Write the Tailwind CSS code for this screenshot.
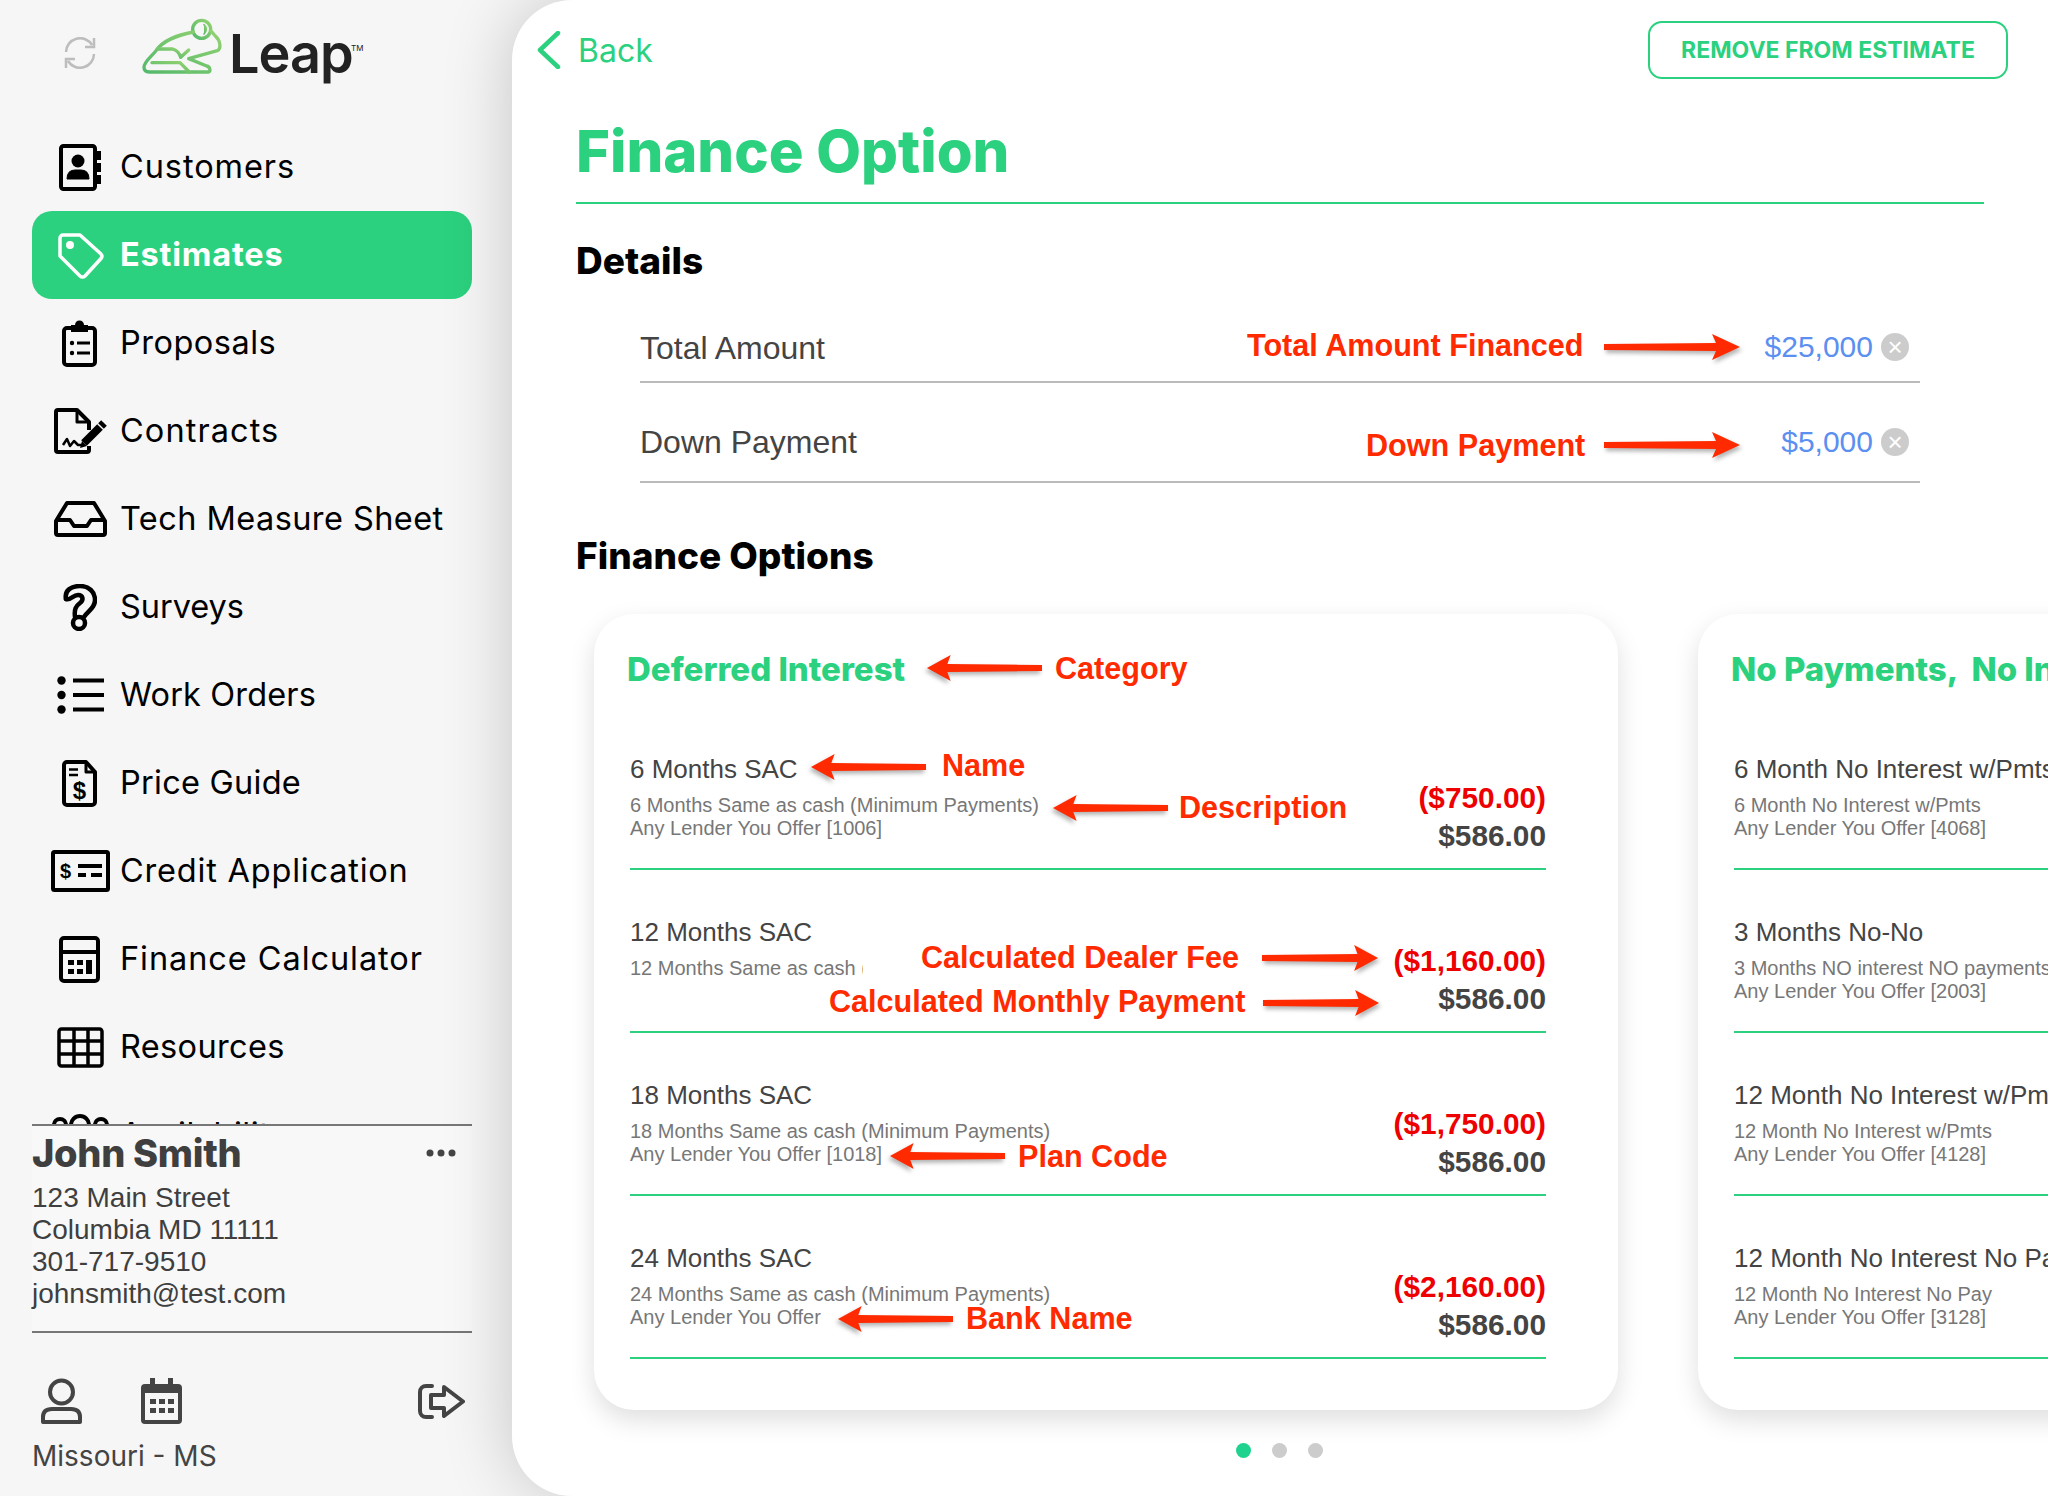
<!DOCTYPE html>
<html lang="en">
<head>
    <meta charset="UTF-8">
    <meta name="viewport" content="width=device-width, initial-scale=1.0">
    <title>Finance Option - Leap</title>
    <script src="https://cdn.jsdelivr.net/npm/@tailwindcss/browser@4"></script>
</head>
<body class="bg-[#f6f6f6]">
    <svg class="hidden">
        <symbol id="arrow" viewBox="0 0 136 28">
            <path d="M0 11 L112 10 L108 1 L136 14 L108 27 L112 18 L0 17Z" fill="#ff2a00"/>
        </symbol>
    </svg>

    <div class="relative flex w-[2048px] h-[1496px] overflow-hidden bg-[#f6f6f6] font-['Inter',sans-serif]">

        <!-- sidebar -->
        <aside class="w-[512px] shrink-0 flex flex-col">
            <div class="h-[123px] flex pl-[64px] shrink-0">
                <svg class="w-[32px] h-[32px] mt-[37px]" viewBox="0 0 32 32" fill="none" stroke="#bdbdbd" stroke-width="2.5">
                    <path d="M2 15 A14 14 0 0 1 28 8 M30 1 V10 H21"/>
                    <path d="M30 17 A14 14 0 0 1 4 24 M2 31 V22 H11"/>
                </svg>
                <svg class="w-[100px] h-[90px] ml-[34px] mt-[10px]" viewBox="0 0 300 270" fill="none" stroke-width="10" stroke-linejoin="round" stroke-linecap="round">
                    <defs>
                        <linearGradient id="frog" x1="0" y1="1" x2="1" y2="0">
                            <stop offset="0" stop-color="#55b96b"/>
                            <stop offset="1" stop-color="#93d271"/>
                        </linearGradient>
                    </defs>
                    <g stroke="url(#frog)">
                        <circle cx="215" cy="58" r="27"/>
                        <path d="M222 44 Q236 58 222 72" fill="url(#frog)" stroke-width="5"/>
                        <path d="M190 66 C140 76 100 90 78 122 C62 142 42 155 42 172 C42 182 48 186 58 186 H235 C243 186 241 170 230 168 L176 146 L262 122 C274 116 272 92 256 78 L242 62"/>
                        <path d="M82 117 H128 Q146 122 152 142 L176 120"/>
                        <path d="M66 158 H150 L178 186"/>
                    </g>
                </svg>
                <div class="relative mt-[27px] -ml-[1px] text-[54px] leading-[54px] font-semibold tracking-[-1px] text-[#222222]">Leap<span class="absolute left-[122px] top-[17px] text-[8px] leading-[8px] font-normal tracking-normal">TM</span></div>
            </div>

            <nav class="h-[1001px] overflow-hidden shrink-0 text-black text-[32.500px]">
                <a class="flex items-center h-[88px] ml-[32px] mr-[40px] tracking-[0.93px]">
                    <span class="w-[88px] shrink-0 pl-[27px]">
                        <svg class="w-[42px] h-[47px]" viewBox="0 0 42 47"><rect x="2" y="2" width="34" height="43" rx="2.500" fill="none" stroke="#000" stroke-width="4"/><path d="M38 7h4v9h-4zM38 19h4v9h-4zM38 31h4v9h-4z"/><circle cx="19" cy="17" r="6.500"/><path d="M8 35 q0-9 8-9 h6 q8 0 8 9 z" stroke="#000" stroke-width="1"/></svg>
                    </span>
                    Customers
                </a>
                <a class="flex items-center h-[88px] ml-[32px] mr-[40px] rounded-[20px] bg-[#2bd17e] text-white font-bold tracking-[0.8px]">
                    <span class="w-[88px] shrink-0 pl-[25px]">
                        <svg class="w-[47px] h-[47px]" viewBox="0 0 47 47" fill="none" stroke="#fff" stroke-width="3.500" stroke-linejoin="round"><path d="M3 6 a3 3 0 0 1 3-3 H23 L44 22 a3.500 3.500 0 0 1 0 4.500 L28 44 a3.500 3.500 0 0 1-5 0 L3 24 Z"/><circle cx="13" cy="13" r="4" fill="#fff" stroke="none"/></svg>
                    </span>
                    Estimates
                </a>
                <a class="flex items-center h-[88px] ml-[32px] mr-[40px] tracking-[0.5px]">
                    <span class="w-[88px] shrink-0 pl-[30px]">
                        <svg class="w-[35px] h-[47px]" viewBox="0 0 35 47"><rect x="2" y="8" width="31" height="37" rx="3" fill="none" stroke="#000" stroke-width="4"/><rect x="9" y="5" width="17" height="7"/><circle cx="17.500" cy="5" r="4.500"/><circle cx="10" cy="23" r="2.200"/><circle cx="10" cy="33" r="2.200"/><path d="M15 21.500h13v3H15zM15 31.500h13v3H15z"/></svg>
                    </span>
                    Proposals
                </a>
                <a class="flex items-center h-[88px] ml-[32px] mr-[40px] tracking-[1.08px]">
                    <span class="w-[88px] shrink-0 pl-[22px]">
                        <svg class="w-[53px] h-[46px]" viewBox="0 0 53 46" fill="none" stroke="#000" stroke-width="4" stroke-linejoin="round"><path d="M35 22 V14 L23 2 H4 a2 2 0 0 0-2 2 V42 a2 2 0 0 0 2 2 H33 a2 2 0 0 0 2-2 V38"/><path d="M23 2 V14 H35" stroke-width="3"/><path d="M9 37 L13 31 L16 38 L20 33 L24 37 H30" stroke-width="2.500"/><path d="M30 35 L46 19" stroke-width="8" stroke-linejoin="miter"/><path d="M47 18 L50 15" stroke-width="8"/><path d="M26 40 L28 33 L33 38 Z" fill="#000" stroke="none"/></svg>
                    </span>
                    Contracts
                </a>
                <a class="flex items-center h-[88px] ml-[32px] mr-[40px] tracking-[0.43px]">
                    <span class="w-[88px] shrink-0 pl-[22px]">
                        <svg class="w-[53px] h-[36px]" viewBox="0 0 53 36" fill="none" stroke="#000" stroke-width="4" stroke-linejoin="round"><path d="M2 20 L13 2 H40 L51 20 V32 a2 2 0 0 1-2 2 H4 a2 2 0 0 1-2-2 Z"/><path d="M2 19 H16 L20 25 H33 L37 19 H51"/></svg>
                    </span>
                    Tech Measure Sheet
                </a>
                <a class="flex items-center h-[88px] ml-[32px] mr-[40px] tracking-[-0.05px]">
                    <span class="w-[88px] shrink-0 pl-[31px]">
                        <svg class="w-[34px] h-[47px]" viewBox="0 0 34 47" fill="none" stroke="#000" stroke-width="4.500" stroke-linecap="round" stroke-linejoin="round"><path d="M3 15 C1 6 9 2 17 2 C26 2 32 8 32 16 C32 24 25 27 21 33"/><path d="M3 15 C7 17 10 11 15 11 C20 11 21 16 17 19 C13 22 11 25 12 33"/><circle cx="16" cy="39" r="6"/></svg>
                    </span>
                    Surveys
                </a>
                <a class="flex items-center h-[88px] ml-[32px] mr-[40px] tracking-[0.15px]">
                    <span class="w-[88px] shrink-0 pl-[25px]">
                        <svg class="w-[47px] h-[38px]" viewBox="0 0 47 38"><circle cx="4.500" cy="4.500" r="4.200"/><circle cx="4.500" cy="19" r="4.200"/><circle cx="4.500" cy="33.500" r="4.200"/><path d="M16 2.500h31v4H16zM16 17h31v4H16zM16 31.500h31v4H16z"/></svg>
                    </span>
                    Work Orders
                </a>
                <a class="flex items-center h-[88px] ml-[32px] mr-[40px] tracking-[0.26px]">
                    <span class="w-[88px] shrink-0 pl-[30px]">
                        <svg class="w-[35px] h-[47px]" viewBox="0 0 35 47" fill="none" stroke="#000" stroke-width="4" stroke-linejoin="round"><path d="M24 2 H5 a3 3 0 0 0-3 3 V42 a3 3 0 0 0 3 3 H30 a3 3 0 0 0 3-3 V12 Z"/><path d="M24 2 V12 H33" stroke-width="3"/><path d="M7 9.500h9M7 15h9" stroke-width="2.500"/><text x="17.500" y="39" text-anchor="middle" font-family="'Liberation Sans',sans-serif" font-weight="700" font-size="24" fill="#000" stroke="none">$</text></svg>
                    </span>
                    Price Guide
                </a>
                <a class="flex items-center h-[88px] ml-[32px] mr-[40px] tracking-[0.8px]">
                    <span class="w-[88px] shrink-0 pl-[19px]">
                        <svg class="w-[59px] h-[42px]" viewBox="0 0 59 42" fill="none" stroke="#000" stroke-width="4"><rect x="2" y="2" width="55" height="38" rx="1.500"/><text x="15" y="28" text-anchor="middle" font-family="'Liberation Sans',sans-serif" font-weight="700" font-size="20" fill="#000" stroke="none">$</text><path d="M27 16h24M27 25h8M40 25h11" stroke-width="4"/></svg>
                    </span>
                    Credit Application
                </a>
                <a class="flex items-center h-[88px] ml-[32px] mr-[40px] tracking-[0.93px]">
                    <span class="w-[88px] shrink-0 pl-[27px]">
                        <svg class="w-[41px] h-[47px]" viewBox="0 0 41 47"><rect x="2" y="2" width="37" height="43" rx="3" fill="none" stroke="#000" stroke-width="4"/><path d="M2 14h37v4H2zM9 24h6v5H9zM18 24h6v5h-6zM9 33h6v5H9zM18 33h6v5h-6zM27 24h6v14h-6z"/></svg>
                    </span>
                    Finance Calculator
                </a>
                <a class="flex items-center h-[88px] ml-[32px] mr-[40px] tracking-[0.35px]">
                    <span class="w-[88px] shrink-0 pl-[25px]">
                        <svg class="w-[47px] h-[41px]" viewBox="0 0 47 41" fill="none" stroke="#000" stroke-width="3.500"><rect x="2" y="2" width="43" height="37" rx="2.500"/><path d="M17 2V39M31 2V39M2 14H45M2 27H45"/></svg>
                    </span>
                    Resources
                </a>
                <a class="flex items-center h-[88px] ml-[32px] mr-[40px] tracking-[0.5px]">
                    <span class="w-[88px] shrink-0 pl-[20px]">
                        <svg class="w-[58px] h-[46px]" viewBox="0 0 58 46" fill="none" stroke="#000" stroke-width="4"><circle cx="8" cy="13" r="6"/><circle cx="28" cy="13" r="9"/><circle cx="49" cy="13" r="6"/></svg>
                    </span>
                    Availability
                </a>
            </nav>

            <div class="ml-[32px] mr-[40px] border-t-[2px] border-b-[2px] border-[#777777] bg-[#f8f8f8] pt-[5px] pb-[21px] text-[#3f3f3f]">
                <div class="flex items-center justify-between pr-[16px]">
                    <span class="text-[38px] leading-[44px] font-extrabold tracking-[-0.3px]">John Smith</span>
                    <svg class="w-[30px] h-[8px]" viewBox="0 0 30 8" fill="#444"><circle cx="4" cy="4" r="3.500"/><circle cx="15" cy="4" r="3.500"/><circle cx="26" cy="4" r="3.500"/></svg>
                </div>
                <div class="mt-[7px] font-['Liberation_Sans',sans-serif] text-[28px] leading-[32px]">
                    <p>123 Main Street</p>
                    <p>Columbia MD 11111</p>
                    <p>301-717-9510</p>
                    <p>johnsmith@test.com</p>
                </div>
            </div>

            <div class="ml-[32px] mr-[40px] pt-[45px] text-[#444444]">
                <div class="flex items-start">
                    <svg class="w-[41px] h-[46px] ml-[9px]" viewBox="0 0 41 46" fill="none" stroke="#444" stroke-width="4"><circle cx="20.500" cy="14" r="11.500"/><path d="M2 44 V39 Q2 31 11 31 H30 Q39 31 39 39 V44 Z" stroke-linejoin="round"/></svg>
                    <svg class="w-[41px] h-[46px] ml-[59px]" viewBox="0 0 41 46"><path d="M9 0h5v6h13V0h5v6h5a4 4 0 0 1 4 4v32a4 4 0 0 1-4 4H4a4 4 0 0 1-4-4V10a4 4 0 0 1 4-4h5z" fill="#444"/><rect x="4" y="15" width="33" height="27" fill="#f6f6f6"/><path d="M9 21h6v5H9zM18 21h6v5h-6zM27 21h6v5h-6zM9 30h6v5H9zM18 30h6v5h-6zM27 30h6v5h-6z" fill="#444"/></svg>
                    <svg class="w-[47px] h-[35px] ml-auto mr-[7px] mt-[6px]" viewBox="0 0 47 35" fill="none" stroke="#444" stroke-width="4" stroke-linejoin="round" stroke-linecap="round"><path d="M14 2 H8 a6 6 0 0 0-6 6 V27 a6 6 0 0 0 6 6 H14"/><path d="M13 11 H26 V3 L45 17.500 L26 32 V24 H13 Z"/></svg>
                </div>
                <div class="mt-[14px] text-[28px] leading-[36px]">Missouri - MS</div>
            </div>
        </aside>

        <!-- main panel -->
        <main class="relative z-10 flex-1 min-w-0 bg-white rounded-l-[60px] shadow-[0_0_70px_rgba(0,0,0,0.2)] pl-[64px]">
            <div class="flex items-center justify-between -ml-[39px] pt-[21px] pr-[40px]">
                <div class="flex items-center text-[#2bd17e]">
                    <svg class="w-[24px] h-[38px]" viewBox="0 0 24 38" fill="none" stroke="#2bd17e" stroke-width="4.500" stroke-linecap="round" stroke-linejoin="round"><path d="M21 2 L3 19 L21 36"/></svg>
                    <span class="ml-[17px] mt-[2px] text-[32px] leading-[40px]">Back</span>
                </div>
                <button class="w-[360px] h-[58px] border-[2px] border-[#2bd17e] rounded-[14px] text-[#2bd17e] text-[23px] font-bold">REMOVE FROM ESTIMATE</button>
            </div>

            <h1 class="w-[1408px] mt-[37px] pb-[16px] border-b-[2px] border-[#2bd17e] text-[#2bd17e] text-[58px] leading-[70px] font-extrabold">Finance Option</h1>

            <h2 class="mt-[35px] text-[37px] leading-[44px] font-extrabold text-black">Details</h2>

            <div class="ml-[64px] w-[1280px] font-['Liberation_Sans',sans-serif]">
                <div class="flex items-center justify-between pt-[45px] pb-[13px] pr-[11px] border-b-[2px] border-[#bbbbbb]">
                    <span class="text-[32px] leading-[40px] text-[#444444]">Total Amount</span>
                    <span class="flex items-center gap-[8px] -translate-y-px">
                        <span class="text-[30px] leading-[40px] text-[#5b8ff0]">$25,000</span>
                        <span class="flex items-center justify-center w-[28px] h-[28px] rounded-full bg-[#cccccc] text-white text-[26px] leading-none">×</span>
                    </span>
                </div>
                <div class="flex items-center justify-between pt-[39px] pb-[19px] pr-[11px] border-b-[2px] border-[#bbbbbb]">
                    <span class="text-[32px] leading-[40px] text-[#444444]">Down Payment</span>
                    <span class="flex items-center gap-[8px]">
                        <span class="text-[30px] leading-[40px] text-[#5b8ff0]">$5,000</span>
                        <span class="flex items-center justify-center w-[28px] h-[28px] rounded-full bg-[#cccccc] text-white text-[26px] leading-none">×</span>
                    </span>
                </div>
            </div>

            <h2 class="mt-[51px] text-[37px] leading-[44px] font-extrabold text-black">Finance Options</h2>

            <div class="flex gap-[80px] mt-[36px] ml-[18px]">
                <section class="w-[1024px] h-[796px] shrink-0 bg-white rounded-[40px] shadow-[0_10px_26px_rgba(0,0,0,0.13)] pt-[33px] pl-[33px]">
                    <h3 class="text-[33px] leading-[44px] font-extrabold text-[#2bd17e]">Deferred Interest</h3>
                    <div class="mt-[16px] ml-[3px] mr-[72px] font-['Liberation_Sans',sans-serif]">
                        <div class="flex justify-between h-[163px] border-b-[2px] border-[#2bd17e]">
                            <div class="pt-[47px]">
                                <p class="text-[26px] leading-[30px] text-[#444444]">6 Months SAC</p>
                                <p class="mt-[10px] text-[20px] leading-[23px] text-[#777777]">6 Months Same as cash (Minimum Payments)<br>Any Lender You Offer [1006]</p>
                            </div>
                            <div class="pt-[72px] text-right text-[29.800px] leading-[38px] font-bold">
                                <p class="text-[#ee0000]">($750.00)</p>
                                <p class="text-[#444444]">$586.00</p>
                            </div>
                        </div>
                        <div class="flex justify-between h-[163px] border-b-[2px] border-[#2bd17e]">
                            <div class="pt-[47px]">
                                <p class="text-[26px] leading-[30px] text-[#444444]">12 Months SAC</p>
                                <p class="mt-[10px] w-[233px] overflow-hidden whitespace-nowrap text-[20px] leading-[23px] text-[#777777]">12 Months Same as cash (</p>
                            </div>
                            <div class="pt-[72px] text-right text-[29.800px] leading-[38px] font-bold">
                                <p class="text-[#ee0000]">($1,160.00)</p>
                                <p class="text-[#444444]">$586.00</p>
                            </div>
                        </div>
                        <div class="flex justify-between h-[163px] border-b-[2px] border-[#2bd17e]">
                            <div class="pt-[47px]">
                                <p class="text-[26px] leading-[30px] text-[#444444]">18 Months SAC</p>
                                <p class="mt-[10px] text-[20px] leading-[23px] text-[#777777]">18 Months Same as cash (Minimum Payments)<br>Any Lender You Offer [1018]</p>
                            </div>
                            <div class="pt-[72px] text-right text-[29.800px] leading-[38px] font-bold">
                                <p class="text-[#ee0000]">($1,750.00)</p>
                                <p class="text-[#444444]">$586.00</p>
                            </div>
                        </div>
                        <div class="flex justify-between h-[163px] border-b-[2px] border-[#2bd17e]">
                            <div class="pt-[47px]">
                                <p class="text-[26px] leading-[30px] text-[#444444]">24 Months SAC</p>
                                <p class="mt-[10px] text-[20px] leading-[23px] text-[#777777]">24 Months Same as cash (Minimum Payments)<br>Any Lender You Offer</p>
                            </div>
                            <div class="pt-[72px] text-right text-[29.800px] leading-[38px] font-bold">
                                <p class="text-[#ee0000]">($2,160.00)</p>
                                <p class="text-[#444444]">$586.00</p>
                            </div>
                        </div>
                    </div>
                </section>

                <section class="w-[1024px] h-[796px] shrink-0 bg-white rounded-[40px] shadow-[0_10px_26px_rgba(0,0,0,0.13)] pt-[33px] pl-[33px]">
                    <h3 class="text-[33px] leading-[44px] font-extrabold text-[#2bd17e] whitespace-pre">No Payments,  No Interest</h3>
                    <div class="mt-[16px] ml-[3px] mr-[72px] font-['Liberation_Sans',sans-serif] whitespace-nowrap">
                        <div class="h-[163px] border-b-[2px] border-[#2bd17e] pt-[47px]">
                            <p class="text-[26px] leading-[30px] text-[#444444]">6 Month No Interest w/Pmts</p>
                            <p class="mt-[10px] text-[20px] leading-[23px] text-[#777777]">6 Month No Interest w/Pmts<br>Any Lender You Offer [4068]</p>
                        </div>
                        <div class="h-[163px] border-b-[2px] border-[#2bd17e] pt-[47px]">
                            <p class="text-[26px] leading-[30px] text-[#444444]">3 Months No-No</p>
                            <p class="mt-[10px] text-[20px] leading-[23px] text-[#777777]">3 Months NO interest NO payments<br>Any Lender You Offer [2003]</p>
                        </div>
                        <div class="h-[163px] border-b-[2px] border-[#2bd17e] pt-[47px]">
                            <p class="text-[26px] leading-[30px] text-[#444444]">12 Month No Interest w/Pmts</p>
                            <p class="mt-[10px] text-[20px] leading-[23px] text-[#777777]">12 Month No Interest w/Pmts<br>Any Lender You Offer [4128]</p>
                        </div>
                        <div class="h-[163px] border-b-[2px] border-[#2bd17e] pt-[47px]">
                            <p class="text-[26px] leading-[30px] text-[#444444]">12 Month No Interest No Pay</p>
                            <p class="mt-[10px] text-[20px] leading-[23px] text-[#777777]">12 Month No Interest No Pay<br>Any Lender You Offer [3128]</p>
                        </div>
                    </div>
                </section>
            </div>

            <div class="flex gap-[21px] mt-[33px] ml-[660px]">
                <span class="w-[15px] h-[15px] rounded-full bg-[#1fd38f]"></span>
                <span class="w-[15px] h-[15px] rounded-full bg-[#cccccc]"></span>
                <span class="w-[15px] h-[15px] rounded-full bg-[#cccccc]"></span>
            </div>
        </main>

        <!-- red call-outs drawn over the screenshot -->
        <div class="absolute inset-0 z-20 pointer-events-none font-['Liberation_Sans',sans-serif] font-bold text-[30.600px] leading-[36px] text-[#ff2a00] whitespace-nowrap">
            <span class="absolute left-[1247px] top-[327px]">Total Amount Financed</span>
            <svg class="absolute left-[1604px] top-[333px] w-[136px] h-[28px] drop-shadow-[2px_3px_2px_rgba(0,0,0,0.3)]"><use href="#arrow"/></svg>

            <span class="absolute left-[1366px] top-[427px]">Down Payment</span>
            <svg class="absolute left-[1604px] top-[431px] w-[136px] h-[28px] drop-shadow-[2px_3px_2px_rgba(0,0,0,0.3)]"><use href="#arrow"/></svg>

            <span class="absolute left-[1055px] top-[650px]">Category</span>
            <svg class="absolute left-[927px] top-[654px] w-[115px] h-[28px] -scale-x-100 drop-shadow-[2px_3px_2px_rgba(0,0,0,0.3)]" viewBox="0 0 136 28" preserveAspectRatio="none"><use href="#arrow"/></svg>

            <span class="absolute left-[942px] top-[747px]">Name</span>
            <svg class="absolute left-[811px] top-[753px] w-[115px] h-[28px] -scale-x-100 drop-shadow-[2px_3px_2px_rgba(0,0,0,0.3)]" viewBox="0 0 136 28" preserveAspectRatio="none"><use href="#arrow"/></svg>

            <span class="absolute left-[1179px] top-[789px]">Description</span>
            <svg class="absolute left-[1053px] top-[794px] w-[115px] h-[28px] -scale-x-100 drop-shadow-[2px_3px_2px_rgba(0,0,0,0.3)]" viewBox="0 0 136 28" preserveAspectRatio="none"><use href="#arrow"/></svg>

            <span class="absolute left-[921px] top-[939px]">Calculated Dealer Fee</span>
            <svg class="absolute left-[1262px] top-[944px] w-[116px] h-[28px] drop-shadow-[2px_3px_2px_rgba(0,0,0,0.3)]" viewBox="0 0 136 28" preserveAspectRatio="none"><use href="#arrow"/></svg>

            <span class="absolute left-[829px] top-[983px]">Calculated Monthly Payment</span>
            <svg class="absolute left-[1263px] top-[989px] w-[116px] h-[28px] drop-shadow-[2px_3px_2px_rgba(0,0,0,0.3)]" viewBox="0 0 136 28" preserveAspectRatio="none"><use href="#arrow"/></svg>

            <span class="absolute left-[1018px] top-[1138px]">Plan Code</span>
            <svg class="absolute left-[890px] top-[1142px] w-[115px] h-[28px] -scale-x-100 drop-shadow-[2px_3px_2px_rgba(0,0,0,0.3)]" viewBox="0 0 136 28" preserveAspectRatio="none"><use href="#arrow"/></svg>

            <span class="absolute left-[966px] top-[1300px]">Bank Name</span>
            <svg class="absolute left-[838px] top-[1305px] w-[115px] h-[28px] -scale-x-100 drop-shadow-[2px_3px_2px_rgba(0,0,0,0.3)]" viewBox="0 0 136 28" preserveAspectRatio="none"><use href="#arrow"/></svg>
        </div>
    </div>
</body>
</html>
